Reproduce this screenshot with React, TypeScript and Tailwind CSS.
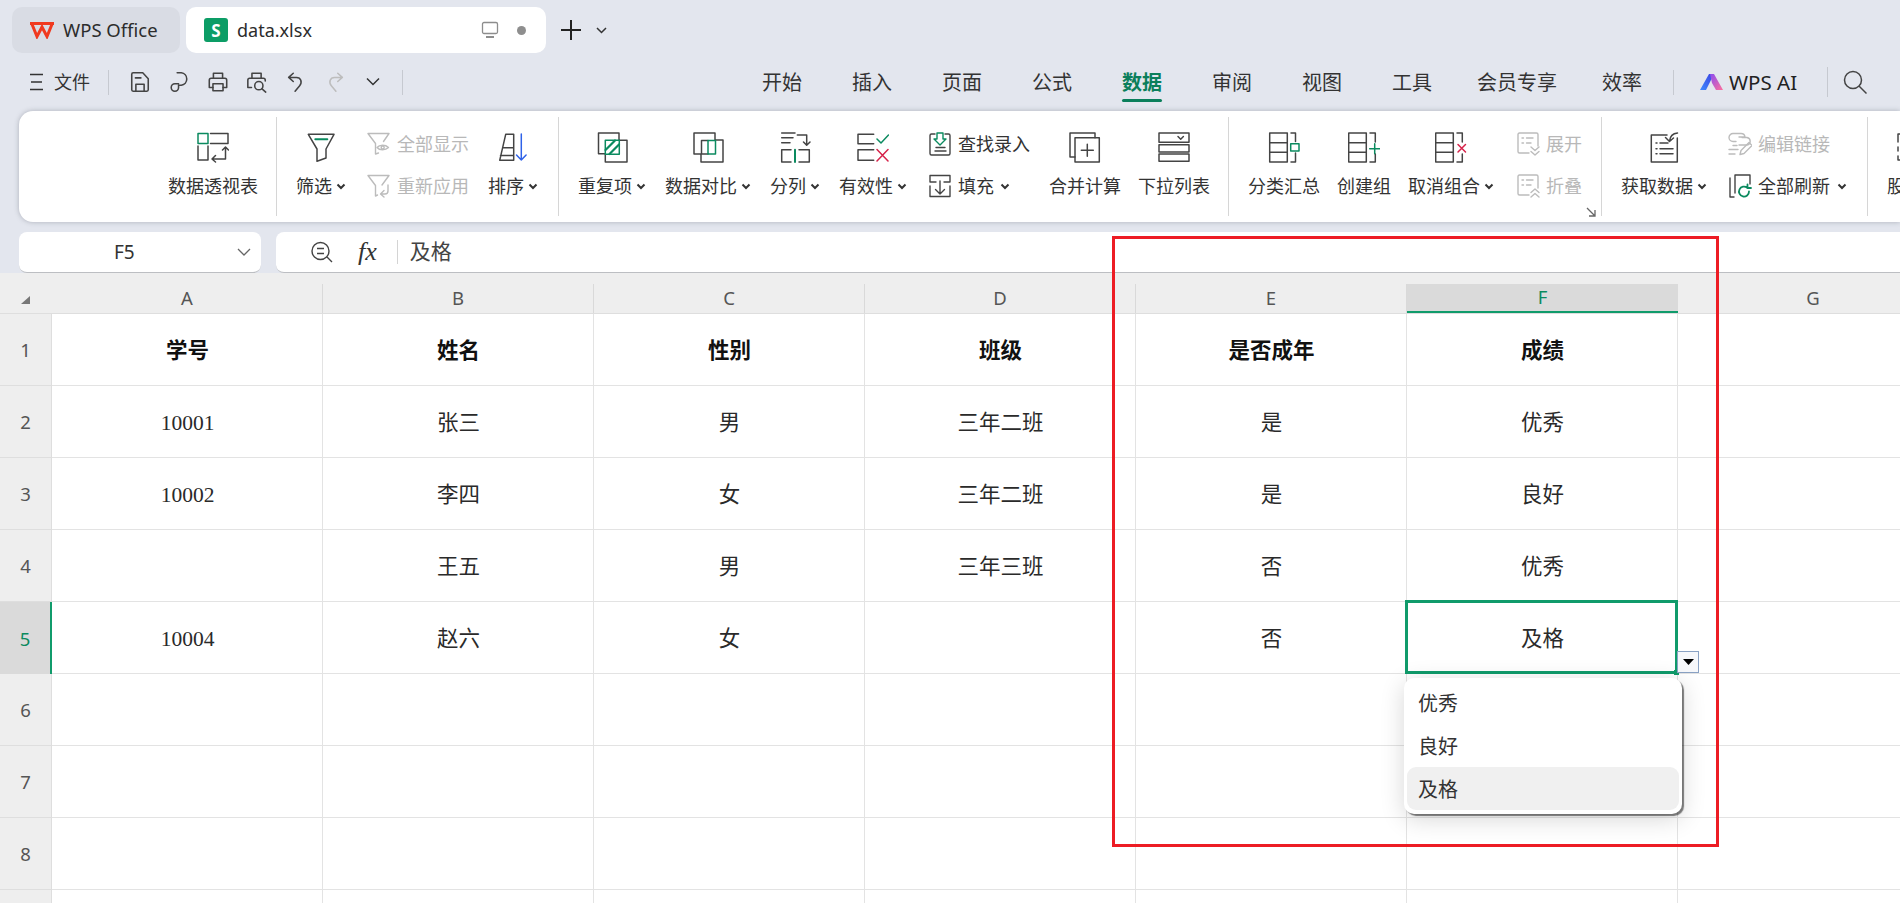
import type { ReactNode } from 'react'

const GREEN = '#0b8a5f'
const RED = '#d6234a'
const GREY = '#bcbcbc'

const Ic = ({ size = 32, box = 32, children, color = '#444', sw = 1.5 }: { size?: number; box?: number; children: ReactNode; color?: string; sw?: number }) => (
  <svg width={size} height={size} viewBox={`0 0 ${box} ${box}`} fill="none" stroke={color} strokeWidth={sw} strokeLinecap="round" strokeLinejoin="round" className="shrink-0">
    {children}
  </svg>
)

const Chev = () => (
  <svg width="10" height="7" viewBox="0 0 10 7" fill="none" stroke="#333" strokeWidth="2" className="ml-[4px] shrink-0">
    <path d="M1.5 1.5 5 5l3.5-3.5" />
  </svg>
)

// ribbon icons, 32 box
const icons: Record<string, ReactNode> = {
  pivot: (
    <>
      <rect x="1" y="2.5" width="10" height="10" stroke={GREEN} />
      <path d="M13.5 2.5H31v10H13.5M1 15v14h10V15M15 28h13.5V16.5M25.5 19l3-3 3 3M18.5 24.5 15 28l3.5 3" />
    </>
  ),
  filter: (
    <>
      <path d="M3.3 3.3H29L21 18v9l-9 3.3V18z" />
      <path d="M10.3 8.3h12" stroke={GREEN} strokeWidth="2" />
    </>
  ),
  sort: (
    <>
      <path d="M2.7 29.3 8.7 3.3h8v26zM6 16.7h10.7M3.5 24.5h13" />
      <path d="M24.3 3v26M19.5 24l4.8 5 4.8-5" stroke="#2f62e8" />
    </>
  ),
  dup: (
    <>
      <path d="M9 22.7H2.5V2H23v7M23.5 9.3H31V31H9.3v-7.5" />
      <rect x="9.3" y="9.3" width="14" height="14" stroke={GREEN} />
      <path d="M9.5 19 19 9.5M13.5 23 23 13.5" stroke={GREEN} strokeWidth="2.2" />
    </>
  ),
  compare: (
    <>
      <path d="M9 23H2V2h21v7M23.5 9H31v22H9v-8M16 9.5H9.5V23H16" />
      <rect x="16" y="9.5" width="7.5" height="13.5" stroke={GREEN} />
    </>
  ),
  split: (
    <>
      <path d="M2.7 2H16M2.7 6.7H14M2.7 11.7H11M18.3 4h9.4v10M24.5 11l3.2 3.3L31 11M12 18.7H2.7V31H12M20 18.7h10.3V31H20" />
      <path d="M16 18.7V31" stroke={GREEN} strokeWidth="2" />
    </>
  ),
  valid: (
    <>
      <path d="M16.7 3.3H1v9.4h15.7M16.7 18.7H1v10.6h15.7" />
      <path d="m20 8 4 4 7.5-8" stroke={GREEN} />
      <path d="m20 18.5 11 11.5M31 18.5 20 30" stroke={RED} />
    </>
  ),
  merge: (
    <>
      <path d="M6 26H1V2h25v4.7" />
      <rect x="6" y="6.7" width="24.3" height="24.3" />
      <path d="M18.3 13.3v12M12.3 19.3h12" />
    </>
  ),
  drop: (
    <>
      <rect x="1" y="2" width="30" height="9.3" />
      <rect x="1" y="13.7" width="30" height="7.3" />
      <rect x="1" y="23" width="30" height="7.3" />
      <path d="m20 5.5 2.7 2.7 2.7-2.7" />
    </>
  ),
  subtotal: (
    <>
      <path d="M1.7 2h17.6v29H1.7zM1.7 11.7h17.6M1.7 21.3h17.6M23 2h4.500v8.500M27.500 22v9H23" />
      <rect x="22.7" y="12.7" width="8.3" height="7.3" stroke={GREEN} />
    </>
  ),
  group: (
    <>
      <path d="M.7 2h17.6v29H.7zM.7 11.7h17.6M.7 21.3h17.6M22 2h5.3v9M27.3 23v8H22" />
      <path d="M26.7 12.7v10M21.7 17.7h10" stroke={GREEN} />
    </>
  ),
  ungroup: (
    <>
      <path d="M.7 2h17.6v29H.7zM.7 11.7h17.6M.7 21.3h17.6M22 2h5.3v9M27.3 23v8H22" />
      <path d="m23 13.5 7.5 7.5M30.5 13.5 23 21" stroke={RED} />
    </>
  ),
  getdata: (
    <>
      <path d="M19 4H3.3v27h26V7" />
      <path d="M8 12h1M8 17.7h1M8 22.7h1M12 12h8M12 17.7h13M12 22.7h13" />
      <path d="M29.5 2c-4.5.5-7.5 3.5-8 8M17.5 6.5l4 4 4-3.5" />
    </>
  ),
  stock: <path d="M8 3H2v8M2 16v4M2 25v4h6M14 3h14v26H14" />,
}

// 24 box icons
const small: Record<string, ReactNode> = {
  showall: (
    <>
      <path d="M1 1.5h21l-5.5 8M1 1.5l7.5 10V22l3-1" />
      <path d="M10 15.5c2.5-3 8.5-3 11.5 0-3 3-9 3-11.5 0z" />
      <circle cx="15.7" cy="15.5" r="1.5" />
    </>
  ),
  reapply: (
    <>
      <path d="M1 1.5h21l-7 9.5M1 1.5l7.5 10V22l2-1" />
      <path d="M21 11v6c0 2-1.5 3-3 3h-4M17 16.5 13.5 20l3.5 3" />
    </>
  ),
  find: (
    <>
      <path d="M7 2H3.5Q2 2 2 3.5v18Q2 23 3.5 23h17q1.5 0 1.5-1.5v-18Q22 2 20.5 2H17M8 15.5h9M7 19h11" />
      <path d="M9 1h6v6h3l-6 6-6-6h3z" stroke={GREEN} />
    </>
  ),
  fill: <path d="M2 8V1.500h20V8h-6M2 8h6M2 12v10.500h20V12M12 7v13M7.500 15.500 12 20l4.500-4.500" />,
  expand: (
    <>
      <path d="M13 21H3.500Q2 21 2 19.500v-17Q2 1 3.500 1h17Q22 1 22 2.500V14M6 6h1.500M10.500 6H17M6 11h1.500M10.500 11H15" />
      <path d="m15 15 4 3.500 4-3.500M15 19.500l4 3.500 4-3.500" />
    </>
  ),
  collapse: (
    <>
      <path d="M13 21H3.500Q2 21 2 19.500v-17Q2 1 3.500 1h17Q22 1 22 2.500V14M6 6h1.500M10.500 6H17M6 11h1.500M10.500 11H15" />
      <path d="m15 18.500 4-3.500 4 3.500M15 23l4-3.500 4 3.500" />
    </>
  ),
  link: (
    <>
      <path d="M8 9.500H5a4 4 0 0 1 0-8h8a4 4 0 0 1 4 3.500M11 5h5M9 13.500H5M14 5.500h5a3.800 3.800 0 0 1 0 7.500h-8" />
      <path d="M1 17.500h9M1 22h6M12 22.500l1-4 8-8 3 3-8 8z" />
    </>
  ),
}

const Big = ({ name, label, chev, ml }: { name: string; label: string; chev?: boolean; ml?: string }) => (
  <div className={`flex flex-col items-center pt-[20px] shrink-0 ${ml ?? ''}`}>
    <div className="flex h-[32px] w-[32px] items-center justify-center">
      <Ic>{icons[name]}</Ic>
    </div>
    <div className="mt-[11px] flex h-[24px] items-center whitespace-nowrap text-[18px] leading-[24px] text-[#333]">
      {label}
      {chev && <Chev />}
    </div>
  </div>
)

const Small = ({ name, label, off, chev, chevMl }: { name: string; label: string; off?: boolean; chev?: boolean; chevMl?: string }) => (
  <div className={`flex h-[24px] items-center whitespace-nowrap text-[18px] leading-[24px] ${off ? 'text-[#b8b8b8]' : 'text-[#333]'}`}>
    <Ic size={24} box={24} color={off ? GREY : '#444'} sw={1.4}>{small[name]}</Ic>
    <span className="ml-[6px]">{label}</span>
    {chev && <span className={chevMl}><Chev /></span>}
  </div>
)

const SmallCol = ({ ml, children }: { ml: string; children: ReactNode }) => (
  <div className={`flex flex-col gap-[18px] pt-[21px] shrink-0 ${ml}`}>{children}</div>
)

const Sep = () => <div className="mt-[6px] h-[99px] w-px shrink-0 bg-[#d6d6d6]" />

const Ribbon = () => (
  <div className="ml-[19px] h-[111px] shrink-0 rounded-l-[14px] bg-white shadow-[0_0_5px_rgba(70,75,90,0.35)]">
    <div className="flex h-full overflow-hidden rounded-l-[14px]">
      <div className="flex w-[257px] shrink-0 justify-end pr-[18px]">
        <Big name="pivot" label="数据透视表" />
      </div>
      <Sep />
      <div className="flex w-[281px] shrink-0 pl-[19px]">
        <Big name="filter" label="筛选" chev />
        <SmallCol ml="ml-[21px]">
          <Small name="showall" label="全部显示" off />
          <Small name="reapply" label="重新应用" off />
        </SmallCol>
        <Big name="sort" label="排序" chev ml="ml-[19px]" />
      </div>
      <Sep />
      <div className="flex w-[669px] shrink-0 pl-[19px]">
        <Big name="dup" label="重复项" chev />
        <Big name="compare" label="数据对比" chev ml="ml-[19px]" />
        <Big name="split" label="分列" chev ml="ml-[19px]" />
        <Big name="valid" label="有效性" chev ml="ml-[19px]" />
        <SmallCol ml="ml-[21px]">
          <Small name="find" label="查找录入" />
          <Small name="fill" label="填充" chev chevMl="ml-[2px]" />
        </SmallCol>
        <Big name="merge" label="合并计算" ml="ml-[19px]" />
        <Big name="drop" label="下拉列表" ml="ml-[17px]" />
      </div>
      <Sep />
      <div className="relative flex w-[372px] shrink-0 pl-[19px]">
        <Big name="subtotal" label="分类汇总" />
        <Big name="group" label="创建组" ml="ml-[17px]" />
        <Big name="ungroup" label="取消组合" chev ml="ml-[17px]" />
        <SmallCol ml="ml-[22px]">
          <Small name="expand" label="展开" off />
          <Small name="collapse" label="折叠" off />
        </SmallCol>
        <svg width="10" height="10" viewBox="0 0 10 10" fill="none" stroke="#666" strokeWidth="1.3" className="absolute bottom-[5px] right-[5px]">
          <path d="m1 1 8 8M9 3v6H3" />
        </svg>
      </div>
      <Sep />
      <div className="flex w-[265px] shrink-0 pl-[19px]">
        <Big name="getdata" label="获取数据" chev />
        <SmallCol ml="ml-[21px]">
          <Small name="link" label="编辑链接" off />
          <div className="flex h-[24px] items-center whitespace-nowrap text-[18px] leading-[24px] text-[#333]">
            <Ic size={24} box={24} sw={1.4}>
              <path d="M6 23H2V4M7 19V1h15v9" />
              <path d="M21 17.5a5 5 0 1 1-1.8-3.8M19.5 10.5V14H23" stroke={GREEN} strokeWidth="1.8" />
            </Ic>
            <span className="ml-[6px]">全部刷新</span>
            <span className="ml-[3px]"><Chev /></span>
          </div>
        </SmallCol>
      </div>
      <Sep />
      <div className="flex min-w-0 flex-1 pl-[19px]">
        <Big name="stock" label="股票" chev />
      </div>
    </div>
  </div>
)

const tabs = ['开始', '插入', '页面', '公式', '数据', '审阅', '视图', '工具', '会员专享', '效率']

const TopBars = () => (
  <>
    <div className="mt-[7px] flex h-[46px] shrink-0 items-stretch pl-[12px]">
      <div className="flex w-[168px] items-center rounded-[10px] bg-[#d9dce4] pl-[17px]">
        <svg width="26" height="18" viewBox="0 0 26 18" fill="none" stroke="#f0391f" strokeWidth="3" strokeLinejoin="miter">
          <path d="M1 2.5h24M2.500 2 8 15.500 13 6l5 9.500L23.500 2" />
        </svg>
        <span className="ml-[8px] whitespace-nowrap text-[18.5px] text-[#2c2c2c]">WPS Office</span>
      </div>
      <div className="ml-[6px] flex w-[360px] items-center rounded-[10px] bg-white pl-[18px]">
        <div className="flex h-[24px] w-[24px] items-center justify-center rounded-[3px] bg-[#0c9d66] text-[17px] font-bold leading-none text-white">S</div>
        <span className="ml-[9px] text-[18px] text-[#2c2c2c]">data.xlsx</span>
        <svg width="18" height="18" viewBox="0 0 18 18" fill="none" stroke="#8d8d8d" strokeWidth="1.3" className="ml-[169px]">
          <rect x="1.5" y="1.5" width="15" height="11" rx="1.5" />
          <path d="M5 16h8" strokeWidth="2" />
        </svg>
        <div className="ml-[18px] h-[9px] w-[9px] rounded-full bg-[#8e8e8e]" />
      </div>
      <div className="ml-[14px] flex items-center">
        <svg width="22" height="22" viewBox="0 0 22 22" stroke="#222" strokeWidth="2" fill="none">
          <path d="M11 1v20M1 11h20" />
        </svg>
        <svg width="11" height="7" viewBox="0 0 11 7" fill="none" stroke="#333" strokeWidth="1.5" className="ml-[14px]">
          <path d="M1 1l4.500 4.500L10 1" />
        </svg>
      </div>
    </div>

    <div className="flex h-[58px] shrink-0 items-center pl-[30px]">
      <svg width="13" height="18" viewBox="0 0 13 18" stroke="#333" strokeWidth="1.5">
        <path d="M0 1.500h13M1 9h11M0 16.500h13" />
      </svg>
      <span className="ml-[11px] text-[18px] leading-[24px] text-[#333]">文件</span>
      <div className="ml-[18px] h-[25px] w-px bg-[#c6c9d0]" />
      <div className="ml-[20px] flex items-center gap-[17px]">
        <Ic size={22} box={24} sw={1.7}>
          <path d="M3 3.500Q3 2 4.500 2H15l6 6.500v12Q21 22 19.500 22h-15Q3 22 3 20.500zM7 7.500h6M7.500 22v-7.500h9V22" />
        </Ic>
        <Ic size={22} box={24} sw={1.7}>
          <path d="M10 2h4.500a6.800 6.800 0 0 1 0 13.500H11.500v2.500a4 4 0 1 1-4-4h4" />
        </Ic>
        <Ic size={22} box={24} sw={1.7}>
          <path d="M7 8V2.500h10V8M6.500 18H2.500V10q0-2 2-2h15q2 0 2 2v8H17.500" />
          <rect x="6.5" y="14" width="11" height="7.5" />
        </Ic>
        <Ic size={22} box={24} sw={1.7}>
          <path d="M6.500 8V2.500h10V8M6 18H2V10q0-2 2-2h15q2 0 2 2v1" />
          <circle cx="14" cy="16" r="4.5" />
          <path d="m17.500 19.500 4 3.500" />
        </Ic>
        <Ic size={22} box={24} sw={1.7}>
          <path d="M9 2.500 4 7l5 4.500M4 7h8.500c5 0 6.500 5.500 3.500 9l-5 6" />
        </Ic>
        <Ic size={22} box={24} color="#bdbdbd" sw={1.7}>
          <path d="m15 2.500 5 4.500-5 4.500M20 7h-8.500c-5 0-6.500 5.500-3.500 9l5 6" />
        </Ic>
        <svg width="16" height="10" viewBox="0 0 16 10" fill="none" stroke="#333" strokeWidth="1.5" className="ml-[2px]">
          <path d="m2 1.500 6 6 6-6" />
        </svg>
      </div>
      <div className="ml-[21px] h-[25px] w-px bg-[#c6c9d0]" />

      <div className="ml-[359px] mt-[2px] flex items-center gap-[50px]">
        {tabs.map((t) => (
          <div
            key={t}
            className={`relative whitespace-nowrap text-[20px] leading-[26px] ${t === '数据' ? 'font-bold text-[#0b7f5b]' : 'text-[#333]'} ${
              t === '会员专享' ? '-ml-[5px]' : t === '效率' ? '-ml-[5px]' : ''
            }`}
          >
            {t}
            {t === '数据' && <div className="absolute -bottom-[6px] left-0 h-[3px] w-full rounded-full bg-[#0b7f5b]" />}
          </div>
        ))}
      </div>
      <div className="ml-[31px] h-[25px] w-px bg-[#c6c9d0]" />
      <svg width="24" height="18" viewBox="0 0 24 18" className="ml-[26px]">
        <defs>
          <linearGradient id="aiA" x1="0" y1="1" x2="1" y2="0">
            <stop offset="0" stopColor="#3f8cff" />
            <stop offset="1" stopColor="#3b3fe0" />
          </linearGradient>
          <linearGradient id="aiB" x1="0" y1="0" x2="1" y2="1">
            <stop offset="0" stopColor="#8a4df0" />
            <stop offset="1" stopColor="#ff6f9c" />
          </linearGradient>
        </defs>
        <path d="M0 17 9 1h5L6 17z" fill="url(#aiA)" />
        <path d="M10 1h4l9 16h-7l-4-7z" fill="url(#aiB)" />
      </svg>
      <span className="ml-[5px] whitespace-nowrap text-[20.5px] leading-[26px] text-[#222]">WPS AI</span>
      <div className="ml-[30px] h-[30px] w-px bg-[#c6c9d0]" />
      <svg width="24" height="24" viewBox="0 0 24 24" fill="none" stroke="#444" strokeWidth="1.5" className="ml-[15px]">
        <circle cx="10" cy="10" r="8.5" />
        <path d="m16 16 7.500 7.500" />
      </svg>
    </div>
  </>
)

const FormulaBar = () => (
  <div className="mt-[10px] flex h-[41px] shrink-0 pl-[19px]">
    <div className="relative flex w-[242px] items-center rounded-[8px] border-b border-[#bcbec2] bg-white pl-[95px] text-[19px] text-[#333]">
      F5
      <svg width="14" height="9" viewBox="0 0 14 9" fill="none" stroke="#666" strokeWidth="1.3" className="absolute right-[10px] top-[16px]">
        <path d="m1 1 6 6 6-6" />
      </svg>
    </div>
    <div className="ml-[15px] flex flex-1 items-center rounded-l-[8px] border-b border-[#bcbec2] bg-white pl-[34px]">
      <svg width="24" height="22" viewBox="0 0 24 22" fill="none" stroke="#444" strokeWidth="1.4">
        <circle cx="10.5" cy="10" r="8.5" />
        <path d="M7 7.500h7M7 12.500h7M17 16l5 5" />
      </svg>
      <i className="ml-[24px] font-['Liberation_Serif',serif] text-[26px] leading-none text-[#333]">fx</i>
      <div className="ml-[20px] h-[24px] w-px bg-[#d4d4d4]" />
      <span className="ml-[12px] -mt-[2px] text-[21px] leading-[26px] text-[#444]">及格</span>
    </div>
  </div>
)

const cols = ['A', 'B', 'C', 'D', 'E', 'F', 'G']
const rows = [
  ['学号', '姓名', '性别', '班级', '是否成年', '成绩', ''],
  ['10001', '张三', '男', '三年二班', '是', '优秀', ''],
  ['10002', '李四', '女', '三年二班', '是', '良好', ''],
  ['', '王五', '男', '三年三班', '否', '优秀', ''],
  ['10004', '赵六', '女', '', '否', '及格', ''],
  ['', '', '', '', '', '', ''],
  ['', '', '', '', '', '', ''],
  ['', '', '', '', '', '', ''],
  ['', '', '', '', '', '', ''],
]

const Sheet = () => (
  <div className="flex min-h-0 flex-1 flex-col overflow-hidden bg-white">
    <div className="flex h-[40px] shrink-0 bg-[#eeeeee]">
      <div className="flex w-[52px] shrink-0 justify-center pl-[1px] pt-[23px]">
        <svg width="9" height="8" viewBox="0 0 9 8" className="-ml-[2px]">
          <path d="M9 0v8H0z" fill="#777" />
        </svg>
      </div>
      {cols.map((c) => (
        <div
          key={c}
          className={`mt-[11px] flex h-[29px] w-[271px] shrink-0 items-center justify-center text-[18.5px] leading-none ${
            c === 'F' ? 'border-b-[2px] border-[#109b6b] bg-[#dadada] text-[#0b8a5f]' : 'border-r border-[#d9d9d9] text-[#555]'
          }`}
        >
          {c}
        </div>
      ))}
    </div>
    <div className="h-px shrink-0 bg-[#dedede]" />
    {rows.map((r, i) => (
      <div key={i} className="flex h-[72px] shrink-0">
        <div
          className={`flex w-[52px] shrink-0 items-center justify-center pt-[1px] text-[18.5px] ${
            i === 4 ? 'border-r-[2px] border-[#109b6b] bg-[#dadada] text-[#0b8a5f]' : 'border-r border-b border-[#dedede] bg-[#eeeeee] text-[#555]'
          }`}
        >
          {i + 1}
        </div>
        {r.map((v, j) => (
          <div
            key={j}
            className={`relative flex w-[271px] shrink-0 items-center justify-center border-r border-b border-[#e3e3e3] pl-[1px] pt-[3px] font-['Liberation_Serif','Noto_Sans_CJK_SC',serif] text-[21.5px] ${
              i === 0 ? 'font-bold text-[#111]' : 'text-[#2a2a2a]'
            } ${i === 4 && j === 5 ? 'z-20' : ''}`}
          >
            {v}
            {i === 4 && j === 5 && (
              <>
                <div className="absolute -bottom-[1px] -left-[2px] -right-[1px] -top-[2px] border-[3px] border-[#109b6b]" />
                <div className="absolute -bottom-[2px] -right-[2px] h-[5px] w-[5px] bg-[#109b6b]" />
                <div className="absolute left-full top-[49px] flex h-[22px] w-[22px] items-center justify-center border border-[#8aa2c4] bg-[#f7f8fb]">
                  <svg width="11" height="6" viewBox="0 0 11 6">
                    <path d="M0 0h11L5.500 6z" fill="#000" />
                  </svg>
                </div>
                <div className="absolute -left-[3px] top-[76px] h-[136px] w-[278px] rounded-[10px] bg-white px-[3px] pt-[3px] font-['Noto_Sans_CJK_SC',sans-serif] text-[20px] text-[#333] shadow-[2px_2px_1px_rgba(0,0,0,0.5),0_5px_24px_rgba(0,0,0,0.16)]">
                  {['优秀', '良好', '及格'].map((o) => (
                    <div key={o} className={`flex h-[43px] items-center rounded-[9px] pl-[11px] ${o === '及格' ? 'bg-[#f0f0f0]' : ''}`}>
                      {o}
                    </div>
                  ))}
                </div>
              </>
            )}
          </div>
        ))}
      </div>
    ))}
  </div>
)

export default function App() {
  return (
    <div className="relative flex h-screen w-screen flex-col overflow-hidden bg-[#e3e6ee] font-['Noto_Sans','Noto_Sans_CJK_SC',sans-serif]">
      <TopBars />
      <Ribbon />
      <FormulaBar />
      <Sheet />
      <div className="pointer-events-none absolute left-[1112px] top-[236px] z-30 h-[611px] w-[607px] border-[3px] border-[#ed1c24]" />
    </div>
  )
}
